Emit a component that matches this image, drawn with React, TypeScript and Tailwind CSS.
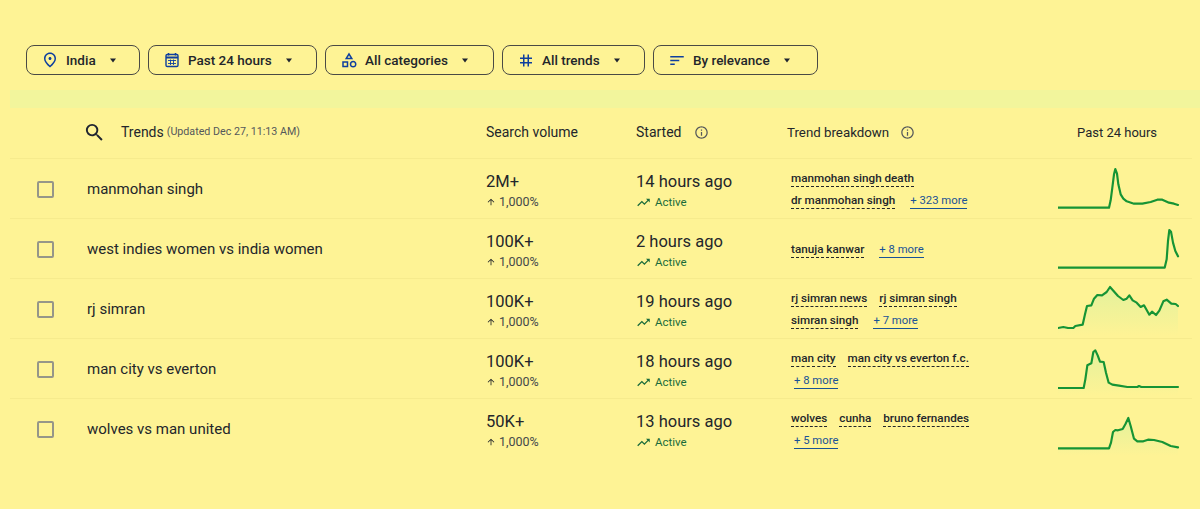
import React from 'react'
import {
  MdArrowUpward,
  MdOutlineCategory,
  MdOutlineInfo,
  MdOutlinePlace,
  MdSearch,
  MdSort,
  MdTag,
  MdTrendingUp,
} from 'react-icons/md'

function CalendarIcon({ className }: { className?: string }) {
  return (
    <svg width="18" height="18" viewBox="0 0 18 18" className={className} fill="none" stroke="currentColor">
      <path d="M5.5 2v2.5M12.500 2v2.500" strokeWidth="1.500" />
      <rect x="3" y="3.500" width="12" height="12" rx="1.300" strokeWidth="1.400" />
      <path d="M3 6.500h12" strokeWidth="2" />
      <path d="M5 9.500h8M5 12.500h8M7.500 8.500v5.500M10.500 8.500v5.500" strokeWidth="0.900" />
    </svg>
  )
}

const filters = [
  { label: 'India', icon: <MdOutlinePlace size={18} />, width: 'w-[114px]' },
  { label: 'Past 24 hours', icon: <CalendarIcon />, width: 'w-[169px]' },
  { label: 'All categories', icon: <MdOutlineCategory size={18} />, width: 'w-[169px]' },
  { label: 'All trends', icon: <MdTag size={23} />, width: 'w-[143px]' },
  { label: 'By relevance', icon: <MdSort size={21} />, width: 'w-[165px]' },
]

// spark points are in 3x px, box is the top of the row in the same units
const trends = [
  {
    title: 'manmohan singh',
    volume: '2M+',
    started: '14 hours ago',
    terms: ['manmohan singh death', 'dr manmohan singh'],
    more: '+ 323 more',
    box: -6,
    spark: '52,140 205,140 210,118 215,80 220,40 224,24 229,38 233,70 240,100 248,113 258,121 280,128 305,128 330,123 350,116 365,116 385,125 400,128 412,132',
  },
  {
    title: 'west indies women vs india women',
    volume: '100K+',
    started: '2 hours ago',
    terms: ['tanuja kanwar'],
    more: '+ 8 more',
    box: 174,
    spark: '52,320 372,320 378,295 382,240 386,207 391,212 397,245 404,270 412,286',
  },
  {
    title: 'rj simran',
    volume: '100K+',
    started: '19 hours ago',
    terms: ['rj simran news', 'rj simran singh', 'simran singh'],
    more: '+ 7 more',
    box: 9,
    spark: '52,156 68,153 82,156 98,156 104,150 126,146 133,115 139,90 152,88 160,68 170,57 184,58 198,48 208,33 218,44 232,60 248,72 258,68 266,58 276,73 288,80 300,93 310,88 326,116 334,107 346,117 356,104 368,76 378,71 392,83 405,84 412,90',
    area: true,
  },
  {
    title: 'man city vs everton',
    volume: '100K+',
    started: '18 hours ago',
    terms: ['man city', 'man city vs everton f.c.'],
    more: '+ 8 more',
    box: 189,
    spark: '52,336 129,336 134,310 140,268 152,262 158,228 164,223 171,238 178,257 189,258 196,290 204,320 215,326 235,329 260,333 290,333 295,330 302,333 412,333',
    area: true,
  },
  {
    title: 'wolves vs man united',
    volume: '50K+',
    started: '13 hours ago',
    terms: ['wolves', 'cunha', 'bruno fernandes'],
    more: '+ 5 more',
    box: 369,
    spark: '52,517 205,517 211,500 217,468 224,462 232,463 246,459 254,445 263,426 270,450 280,488 290,496 308,496 322,491 340,492 365,498 390,510 412,514',
    area: true,
  },
]

function Caret() {
  return (
    <svg width="6" height="5" viewBox="0 0 6 5" className="ml-[14px] shrink-0">
      <path d="M0 0.5h6L3 4.5z" fill="#1f2430" />
    </svg>
  )
}

function Spark({ points, box, area, id }: { points: string; box: number; area?: boolean; id: string }) {
  const pts = points.split(' ')
  const bottom = box + 170
  return (
    <svg width="124" height="60" viewBox={`52 ${box} 372 180`} className="block">
      {area && (
        <>
          <defs>
            <linearGradient id={id} x1="0" x2="0" y1="0" y2="1">
              <stop offset="0" stopColor="#d2f0a0" stopOpacity="0.6" />
              <stop offset="1" stopColor="#d2f0a0" stopOpacity="0" />
            </linearGradient>
          </defs>
          <polygon points={`${pts[0].split(',')[0]},${bottom} ${points} 412,${bottom}`} fill={`url(#${id})`} />
        </>
      )}
      <polyline points={points} fill="none" stroke="#169435" strokeWidth="6.5" strokeLinejoin="round" strokeLinecap="round" />
    </svg>
  )
}

export default function App() {
  return (
    <div className="h-[509px] w-[1200px] overflow-hidden bg-[#fef395] font-['Roboto','Liberation_Sans',sans-serif] text-[#23262b]">
      <div className="flex gap-2 pl-[26px] pt-[45px]">
        {filters.map(({ label, icon, width }) => (
          <div
            key={label}
            className={`${width} flex h-[30px] items-center rounded-lg border border-[#4a4a45] pl-[14px] text-[13.5px] font-medium`}
          >
            <span className="flex h-[18px] w-[18px] shrink-0 items-center justify-center text-[#0e3f9e]">{icon}</span>
            <span className="ml-[7px]">{label}</span>
            <Caret />
          </div>
        ))}
      </div>

      <div className="ml-[10px] mt-[15px] h-[18px] bg-[#f2f59c]" />

      <div className="ml-[10px] w-[1182px]">
        <div className="grid h-[51px] grid-cols-[476px_150px_151px_270px_135px] items-center border-b border-[#f6eb8d] pb-px font-[450]">
          <div className="flex items-center pl-[73px] text-[14px]">
            <MdSearch size={23} className="text-[#1f2430]" />
            <span className="ml-[15px]">Trends</span>
            <span className="ml-[3px] text-[10.7px] font-normal text-[#55585a]">(Updated Dec 27, 11:13 AM)</span>
          </div>
          <div className="text-[14px]">Search volume</div>
          <div className="flex items-center gap-[12px] text-[14px]">
            Started
            <MdOutlineInfo size={15} className="text-[#55585a]" />
          </div>
          <div className="flex items-center gap-[11px] text-[13.300px]">
            Trend breakdown
            <MdOutlineInfo size={15} className="text-[#55585a]" />
          </div>
          <div className="pl-[20px] text-[13px]">Past 24 hours</div>
        </div>

        {trends.map((t, i) => (
          <div
            key={t.title}
            className="grid h-[60px] grid-cols-[77px_399px_150px_155px_267px_134px] items-center border-b border-[#f6eb8d] last:border-b-0"
          >
            <div className="pl-[27px]">
              <div className="h-[17px] w-[17px] rounded-[2px] border-2 border-[#969688]" />
            </div>
            <div className="text-[15px]">{t.title}</div>
            <div className="pt-[3px]">
              <div className="text-[16.500px] leading-[20px]">{t.volume}</div>
              <div className="mt-[3px] flex items-center gap-[3px] text-[12.500px] leading-[14px] text-[#44484a]">
                <MdArrowUpward size={10} className="text-[#23262b]" />
                1,000%
              </div>
            </div>
            <div className="pt-[3px]">
              <div className="text-[16.500px] leading-[20px]">{t.started}</div>
              <div className="mt-[3px] flex items-center gap-[4px] text-[11.500px] leading-[14px] text-[#1a6b3a]">
                <MdTrendingUp size={15} className="text-[#1a6b3a]" />
                Active
              </div>
            </div>
            <div className="flex w-[190px] flex-wrap items-center gap-x-[12px] gap-y-[6px] pt-[2px] text-[11.700px] font-medium leading-[15px]">
              {t.terms.map(term => (
                <span key={term} className="border-b border-dashed border-[#23262b]">
                  {term}
                </span>
              ))}
              <span className="ml-[3px] border-b border-[#1a5296] text-[11.300px] font-normal text-[#1a5296]">{t.more}</span>
            </div>
            <Spark points={t.spark} box={t.box} area={t.area} id={`spark-${i}`} />
          </div>
        ))}
      </div>
    </div>
  )
}
